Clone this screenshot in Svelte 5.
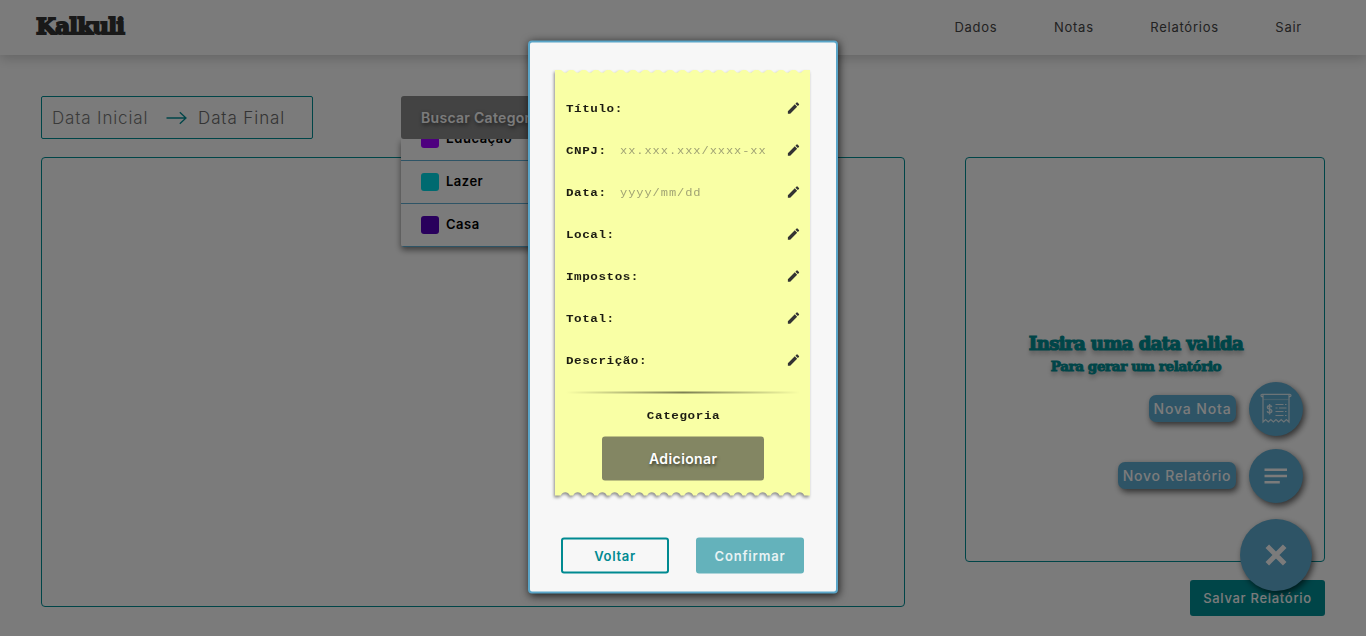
<script>
  const nav = ['Dados', 'Notas', 'Relatórios', 'Sair'];
  const categories = [
    { name: 'Educação', color: '#9c00ff' },
    { name: 'Lazer', color: '#00d4e0' },
    { name: 'Casa', color: '#5200b8' }
  ];
  const fields = [
    { label: 'Título:' },
    { label: 'CNPJ:', hint: 'xx.xxx.xxx/xxxx-xx' },
    { label: 'Data:', hint: 'yyyy/mm/dd' },
    { label: 'Local:' },
    { label: 'Impostos:' },
    { label: 'Total:' },
    { label: 'Descrição:' }
  ];

  // Outline of the paper slip: shallow dips on top, round notches below.
  const width = 255;
  const height = 427;
  const step = 12.34;
  let paper = 'M0 .6H5';
  for (let i = 0; i < 20; i++) {
    const x = 10.3 + i * step;
    paper += `L${x - 4.6} .6Q${x - 3.4} .8 ${x - 2.4} 2T${x} 3.2T${x + 2.4} 2T${x + 4.6} .6`;
  }
  paper += `L${width} .6V${height - 1}`;
  for (let i = 19; i >= 0; i--) {
    const x = 10.3 + i * step;
    paper += `H${x + 4.5}Q${x + 3} ${height - 4.3} ${x} ${height - 4.3}T${x - 4.5} ${height - 1}`;
  }
  paper += `H0Z`;
</script>

<div class="page">
  <header>
    <div class="logo">Kalkuli</div>
    <nav>
      {#each nav as item}<a href="#top">{item}</a>{/each}
    </nav>
  </header>

  <main>
    <div class="filters">
      <div class="dates">
        <span class="initial">Data Inicial</span>
        <svg width="22" height="14" viewBox="0 0 22 14" fill="none" stroke="#008a91" stroke-width="1.3"><path d="M.5 7H20M13.8 1.2 20 7l-6.2 5.800" /></svg>
        <span class="final">Data Final</span>
      </div>
      <div class="dropdown">
        <div class="search">Buscar Categorias</div>
        <div class="menu">
          {#each categories as c}
            <div class="option"><i style="background:{c.color}"></i><span>{c.name}</span></div>
          {/each}
        </div>
      </div>
    </div>

    <div class="content">
      <section class="notes"></section>
      <aside>
        <section class="report">
          <h2>Insira uma data valida</h2>
          <h3>Para gerar um relatório</h3>
        </section>
        <button class="save">Salvar Relatório</button>
      </aside>
    </div>
  </main>

  <div class="fabs">
    <div class="fab-row">
      <span class="tag note">Nova Nota</span>
      <div class="fab">
        <svg width="32" height="32" viewBox="0 0 32 32" fill="none" stroke="#f7f7f7" stroke-opacity=".8" stroke-width="1.200">
          <path d="M3 3.700H2.200a1.200 1.200 0 0 1 0-2.400h27.600a1.200 1.200 0 0 1 0 2.400H29" />
          <path d="M3 2v27l2.600-2.500 2.600 2.500 2.600-2.500 2.600 2.500 2.600-2.500 2.600 2.500 2.600-2.500 2.600 2.500 2.600-2.500L29 29V2" />
          <path d="M3.500 6.500h25" stroke-opacity=".3" />
          <path d="M15.500 11.500h8m1.500 0h1.500M15.500 15h2m1.500 0h7.500M15.500 18.500h8m1.500 0h1.500M15.500 22.500h8m1.500 0h1.500" />
          <path d="M11.800 14.200c-.2-1-1-1.500-2.200-1.500-1.300 0-2.200.6-2.200 1.700 0 2.300 4.500 1.200 4.500 3.600 0 1.200-1 1.800-2.300 1.800-1.400 0-2.200-.6-2.400-1.700M9.600 11v10.600" stroke-width="1.400" />
        </svg>
      </div>
    </div>
    <div class="fab-row">
      <span class="tag rel">Novo Relatório</span>
      <div class="fab">
        <svg width="24" height="16" viewBox="0 0 24 16" fill="#f7f7f7"><path d="M.5.500h22.500v2.600H.5zM.5 6.700h22.500v2.600H.5zM.5 12.900h15.300v2.600H.5z" /></svg>
      </div>
    </div>
    <div class="fab big">
      <svg width="22" height="22" viewBox="0 0 22 22" stroke="#f7f7f7" stroke-width="5"><path d="m2.300 2.300 17.400 17.400M19.700 2.300 2.300 19.700" /></svg>
    </div>
  </div>

  <div class="overlay">
    <div class="modal">
      <div class="receipt">
        <svg class="paper" {width} {height} viewBox="0 0 {width} {height}"><path d={paper} fill="#f9ffa5" /></svg>
        {#each fields as f}
          <div class="field">
            <b>{f.label}</b>
            <span>{f.hint ?? ''}</span>
            <svg width="15" height="15" viewBox="0 0 24 24" fill="#333"><path d="M3 17.250V21h3.750L17.810 9.940l-3.750-3.750L3 17.250zM20.710 7.040a1 1 0 0 0 0-1.410l-2.340-2.340a1 1 0 0 0-1.410 0l-1.830 1.830 3.750 3.750 1.830-1.830z" /></svg>
          </div>
        {/each}
        <div class="line"></div>
        <b class="category">Categoria</b>
        <button class="add">Adicionar</button>
      </div>
      <div class="actions">
        <button class="back">Voltar</button>
        <button class="confirm">Confirmar</button>
      </div>
    </div>
  </div>
</div>

<style>
  :global(body) { margin: 0; overflow: hidden; }
  * { box-sizing: border-box; }
  button { border: 0; padding: 0; font: inherit; }
  .page {
    position: relative;
    height: 636px;
    overflow: hidden;
    background: #f7f7f7;
    font-family: Inter, sans-serif;
  }
  header {
    display: flex;
    align-items: center;
    justify-content: space-between;
    height: 55px;
    padding: 0 64px 0 36px;
    box-shadow: 0 3px 12px rgba(0, 0, 0, .2);
  }
  .logo {
    font: bold 23px/30px "DejaVu Serif", serif;
    letter-spacing: -.8px;
    color: #333;
    -webkit-text-stroke: 1.8px #333;
    padding-bottom: 3px;
  }
  nav { display: flex; gap: 56.500px; padding-bottom: 2px; }
  nav a { color: #444; text-decoration: none; font-size: 13px; letter-spacing: .75px; white-space: nowrap; }
  main { padding: 41px 41px 0; }
  .filters { display: flex; gap: 88px; height: 43px; }
  .dates {
    display: flex;
    align-items: center;
    width: 272px;
    padding-left: 10px;
    border: 1px solid #008a91;
    border-radius: 2px;
    font-size: 17px;
    font-weight: 300;
    color: #757575;
    white-space: nowrap;
  }
  .initial { width: 114px; letter-spacing: .85px; }
  .final { margin-left: 10px; color: #686868; letter-spacing: .9px; }
  .dropdown { position: relative; z-index: 2; width: 270px; }
  .search {
    position: relative;
    z-index: 1;
    height: 43px;
    padding-left: 20px;
    border-radius: 3px;
    background: #868686;
    color: #f7f7f7;
    font-size: 14px;
    font-weight: 600;
    line-height: 43px;
    letter-spacing: .3px;
    text-shadow: 1px 2px 4px rgba(0, 0, 0, .6);
  }
  .menu {
    position: absolute;
    top: 43px;
    left: 0;
    right: 0;
    height: 108px;
    display: flex;
    flex-direction: column;
    justify-content: flex-end;
    overflow: hidden;
    border-radius: 0 0 3px 3px;
    background: #f7f7f7;
    box-shadow: 0 3px 6px rgba(0, 0, 0, .5);
  }
  .option {
    flex: none;
    display: flex;
    align-items: center;
    gap: 7px;
    height: 43px;
    padding-left: 20px;
    border-bottom: 1px solid #5ca8cc;
    font-size: 13px;
    font-weight: 600;
    letter-spacing: .5px;
  }
  .option span { padding-bottom: 2px; }
  .option i { width: 18px; height: 18px; border-radius: 3px; }
  .content { display: grid; grid-template-columns: 864px 360px; gap: 60px; margin-top: 18px; }
  .notes, .report { border: 1px solid #008a91; border-radius: 4px; }
  .notes { height: 450px; }
  aside { display: flex; flex-direction: column; align-items: flex-end; gap: 18px; }
  .report {
    width: 360px;
    height: 405px;
    padding: 173px 18px 0 0;
    text-align: center;
    font-family: "DejaVu Serif", serif;
    color: #008a91;
    text-shadow: 0 4px 5px rgba(0, 0, 0, .35);
    -webkit-text-stroke: 1.200px #008a91;
    white-space: nowrap;
  }
  h2, h3 { margin: 0; }
  h2 { font-size: 18px; line-height: 26px; letter-spacing: -.55px; }
  h3 { font-size: 13.500px; line-height: 18px; letter-spacing: -.4px; -webkit-text-stroke-width: .9px; }
  .save {
    width: 135px;
    height: 36px;
    border-radius: 3px;
    background: #008a91;
    color: #f7f7f7;
    font-size: 13px;
    font-weight: 500;
    letter-spacing: .7px;
  }
  .fabs {
    position: absolute;
    right: 54px;
    bottom: 45px;
    display: flex;
    flex-direction: column;
    align-items: flex-end;
    gap: 13px;
  }
  .fab-row { display: flex; align-items: center; gap: 13px; padding-right: 9px; }
  .tag, .fab { background: #5ca8cc; box-shadow: 2px 3px 6px rgba(0, 0, 0, .6); }
  .tag {
    height: 27px;
    margin-bottom: 1px;
    border-radius: 7px;
    color: #f7f7f7;
    font-size: 14px;
    font-weight: 500;
    line-height: 27px;
    text-align: center;
    white-space: nowrap;
  }
  .note { width: 87px; letter-spacing: .85px; }
  .rel { width: 118px; letter-spacing: .75px; }
  .fab { display: grid; place-items: center; width: 54px; height: 54px; border-radius: 50%; }
  .big { width: 72px; height: 72px; margin-top: 3px; }
  .overlay {
    position: absolute;
    inset: 0;
    z-index: 5;
    display: flex;
    justify-content: center;
    align-items: flex-start;
    padding-top: 41px;
    background: rgba(0, 0, 0, .5);
  }
  .modal {
    width: 310px;
    height: 553px;
    padding: 27px 24.500px;
    border: 2px solid #5aa5c8;
    border-radius: 4px;
    background: #f7f7f7;
    box-shadow: 1px 2px 8px rgba(0, 0, 0, .75);
    transform: translateY(-.5px);
  }
  .receipt {
    position: relative;
    display: flex;
    flex-direction: column;
    align-items: center;
    width: 256px;
    height: 427px;
    padding: 17px 10px 0 11.500px;
  }
  .paper { position: absolute; top: 0; left: .5px; overflow: visible; filter: drop-shadow(-.5px 2px 1.500px rgba(0, 0, 0, .42)); }
  .field {
    position: relative;
    display: flex;
    align-items: center;
    width: 100%;
    height: 42px;
    font: 11.500px/20px "Liberation Mono", monospace;
    white-space: nowrap;
  }
  .field b, .field span { padding-top: 2px; letter-spacing: .5px; transform: scaleX(1.095); transform-origin: left; }
  .field b, .category { color: #1c1c12; }
  .field span { flex: 1; margin-left: 17px; color: #a0a374; font-size: 11px; letter-spacing: .840px; }
  .line {
    position: relative;
    width: 234px;
    height: 2px;
    margin-top: 11px;
    background: linear-gradient(90deg, transparent, rgba(0, 0, 0, .5), transparent);
  }
  .category {
    position: relative;
    margin-top: 12px;
    font: bold 11.500px/20px "Liberation Mono", monospace;
    letter-spacing: .55px;
    transform: scaleX(1.095);
  }
  .add {
    position: relative;
    width: 162px;
    height: 44px;
    flex: none;
    margin-top: 11px;
    padding-bottom: 2px;
    border-radius: 3px;
    background: #838663;
    color: #fff;
    font-size: 14px;
    font-weight: 600;
    letter-spacing: .4px;
    text-shadow: 1px 2px 3px rgba(0, 0, 0, .5);
  }
  .actions { display: flex; gap: 27px; margin: 41px 0 0 6.500px; }
  .actions button { width: 108px; height: 36px; border-radius: 3px; font-size: 13px; font-weight: 600; letter-spacing: .7px; }
  .actions .back { border: 2px solid #008a91; background: #f7f7f7; color: #008a91; }
  .actions .confirm { background: #64b2bb; color: #e8f3f4; letter-spacing: .8px; }
</style>
